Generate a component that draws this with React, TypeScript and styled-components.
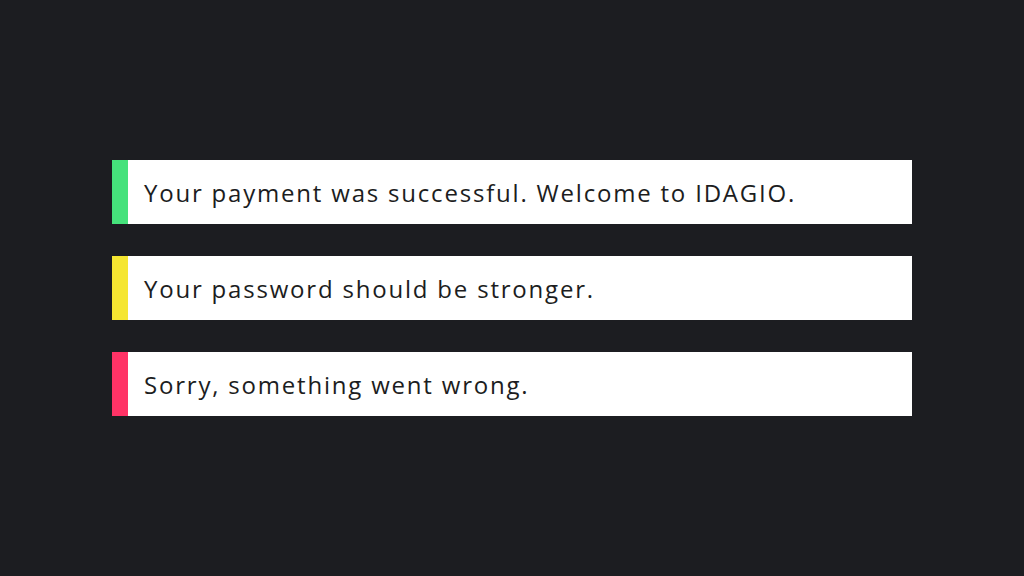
import React from "react";
import styled, { createGlobalStyle } from "styled-components";

const Global = createGlobalStyle`
  html, body { margin: 0; padding: 0; background: #1c1d21; }
  body { width: 1024px; height: 576px; overflow: hidden; }
`;

const Page = styled.div`
  width: 1024px;
  height: 576px;
  display: flex;
  flex-direction: column;
  justify-content: center;
  align-items: center;
  gap: 32px;
`;

const Notice = styled.div<{ $accent: string }>`
  box-sizing: border-box;
  width: 800px;
  height: 64px;
  background: #ffffff;
  border-left: 16px solid ${(p) => p.$accent};
  display: flex;
  align-items: center;
  padding-left: 16px;
  font-family: "Open Sans", "Noto Sans", sans-serif;
  font-size: 24px;
  font-weight: 500;
  letter-spacing: 1.8px;
  color: #1c1d21;
`;

const messages = [
  { accent: "#45e27b", text: "Your payment was successful. Welcome to IDAGIO." },
  { accent: "#f5e631", text: "Your password should be stronger." },
  { accent: "#ff3366", text: "Sorry, something went wrong." },
];

export default function App() {
  return (
    <>
      <Global />
      <Page>
        {messages.map((m) => (
          <Notice key={m.text} $accent={m.accent}>
            {m.text}
          </Notice>
        ))}
      </Page>
    </>
  );
}
